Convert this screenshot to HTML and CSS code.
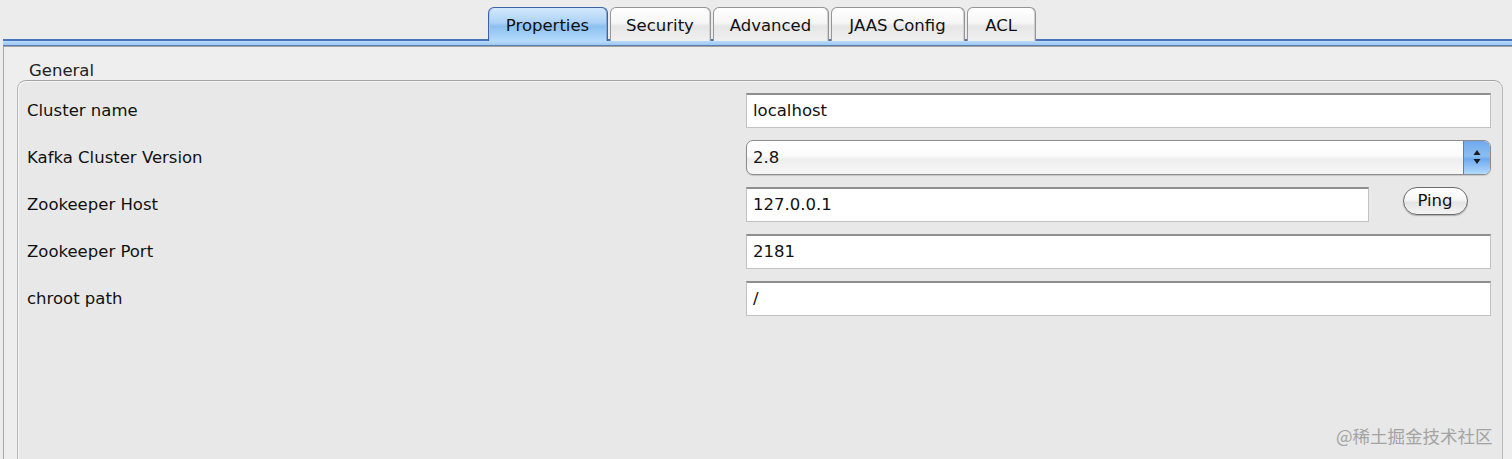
FILE: index.html
```html
<!DOCTYPE html>
<html>
<head>
<meta charset="utf-8">
<link rel="stylesheet" href="styles.css">
</head>
<body>
<div class="pane">
  <div class="tabs">
    <div class="tab tab-selected tab-w1">Properties</div>
    <div class="tab tab-w2">Security</div>
    <div class="tab tab-w3">Advanced</div>
    <div class="tab tab-w4">JAAS Config</div>
    <div class="tab tab-w5">ACL</div>
  </div>
  <div class="strip"></div>
  <div class="content">
    <div class="group-title">General</div>
    <div class="group">
      <div class="row">
        <div class="label">Cluster name</div>
        <div class="field">localhost</div>
      </div>
      <div class="row">
        <div class="label">Kafka Cluster Version</div>
        <div class="select">
          <span class="select-value">2.8</span>
          <span class="select-arrows">
            <svg width="10" height="16" viewBox="0 0 10 16"><path d="M5 1 L8.5 6 L1.5 6 Z" fill="#1a1a1a"/><path d="M5 15 L8.5 10 L1.5 10 Z" fill="#1a1a1a"/></svg>
          </span>
        </div>
      </div>
      <div class="row">
        <div class="label">Zookeeper Host</div>
        <div class="host">
          <div class="field field-host">127.0.0.1</div>
          <div class="ping-cell"><button class="ping">Ping</button></div>
        </div>
      </div>
      <div class="row">
        <div class="label">Zookeeper Port</div>
        <div class="field">2181</div>
      </div>
      <div class="row">
        <div class="label">chroot path</div>
        <div class="field">/</div>
      </div>
    </div>
  </div>
</div>
<div class="watermark">@稀土掘金技术社区</div>
</body>
</html>
```
FILE: styles.css
```css
html, body {
  margin: 0;
  padding: 0;
  height: 100%;
  overflow: hidden;
}
body {
  background: #ececec;
  font-family: "DejaVu Sans", "Liberation Sans", sans-serif;
  font-size: 16.5px;
  color: #111;
  position: relative;
}
.pane {
  margin-left: 3px;
  width: 1517px;
  height: 459px;
  display: flex;
  flex-direction: column;
}
.tabs {
  display: flex;
  justify-content: center;
  gap: 2px;
  padding-top: 7px;
  height: 32px;
  position: relative;
  z-index: 2;
}
.tab {
  box-sizing: border-box;
  height: 34px;
  border: 1px solid #959595;
  border-bottom: none;
  border-radius: 6px 6px 0 0;
  background: linear-gradient(#ffffff 0%, #f6f6f6 45%, #e6e6e6 55%, #f0f0f0 100%);
  box-shadow: inset -1px 0 0 #d0d0d0;
  display: flex;
  align-items: center;
  justify-content: center;
  padding-top: 1px;
  color: #111;
}
.tab-selected {
  border-color: #3d63a6;
  background: linear-gradient(#d3e8fc 0%, #acd2f6 45%, #8cc0f1 55%, #b5dafb 100%);
  box-shadow: inset 1px 0 0 #a6c8ec, inset -1px 0 0 #7ea9da;
}
.tab-w1 { width: 120px; }
.tab-w2 { width: 101px; }
.tab-w3 { width: 116px; }
.tab-w4 { width: 134px; }
.tab-w5 { width: 69px; }
.strip {
  height: 4px;
  border-top: 2px solid #4775ba;
  border-bottom: 1px solid #5b7fb0;
  background: linear-gradient(#b9dafa, #9cc8f2);
  box-shadow: 0 1px 0 #a0a0a0;
  position: relative;
  z-index: 1;
}
.content {
  flex: 1;
  border-left: 1px solid #a9a9a9;
  background: #eeeeee;
  margin-top: 1px;
  display: flex;
  flex-direction: column;
}
.group-title {
  padding-left: 25px;
  padding-top: 14px;
  height: 19px;
  line-height: 20px;
  color: #222;
}
.group {
  flex: 1;
  margin-left: 13px;
  width: 1486px;
  box-sizing: border-box;
  border: 1px solid #b9b9b9;
  border-top-color: #a3a3a3;
  border-bottom: none;
  border-radius: 9px 9px 0 0;
  background: #e8e8e8;
  padding: 12px 11px 0 9px;
  display: flex;
  flex-direction: column;
  gap: 12px;
  box-shadow: inset 1px 1px 0 #f6f6f6;
}
.row {
  display: grid;
  grid-template-columns: 719px 1fr;
  align-items: center;
  height: 35px;
}
.label {
  color: #111;
}
.field {
  box-sizing: border-box;
  height: 35px;
  background: #ffffff;
  border: 1px solid #c2c2c2;
  border-top: 2px solid #8f8f8f;
  padding-left: 6px;
  display: flex;
  align-items: center;
  padding-bottom: 1px;
}
.select {
  box-sizing: border-box;
  height: 35px;
  border: 1px solid #8c8c8c;
  border-radius: 7px;
  background: linear-gradient(#ffffff 0%, #fbfbfb 45%, #eeeeee 55%, #f7f7f7 100%);
  box-shadow: 0 1px 1px rgba(0,0,0,0.15);
  display: flex;
  align-items: center;
  overflow: hidden;
  margin-top: -1px;
}
.select-value {
  flex: 1;
  padding-left: 6px;
}
.select-arrows {
  width: 26px;
  align-self: stretch;
  background: linear-gradient(#6fa9ec 0%, #8cbdf2 45%, #6eaaf0 55%, #b2dafd 100%);
  border-left: 1px solid #5680b8;
  display: flex;
  align-items: center;
  justify-content: center;
}
.host {
  display: flex;
  align-items: flex-start;
  height: 35px;
}
.field-host {
  width: 623px;
}
.ping-cell {
  flex: 1;
  display: flex;
  justify-content: center;
  padding-left: 10px;
}
.ping {
  box-sizing: border-box;
  width: 65px;
  height: 28px;
  border: 1px solid #6b6b6b;
  border-radius: 14px;
  background: linear-gradient(#ffffff 0%, #f7f7f7 45%, #e4e4e4 55%, #f4f4f4 100%);
  box-shadow: 0 1px 1px rgba(0,0,0,0.25);
  font-family: "DejaVu Sans", "Liberation Sans", sans-serif;
  font-size: 16.5px;
  color: #111;
  padding: 0 0 2px 0;
}
.watermark {
  position: absolute;
  left: 1336px;
  top: 423px;
  font-family: "Noto Sans CJK SC", "Noto Sans", sans-serif;
  font-size: 17.5px;
  color: #a3a3a3;
}
```
